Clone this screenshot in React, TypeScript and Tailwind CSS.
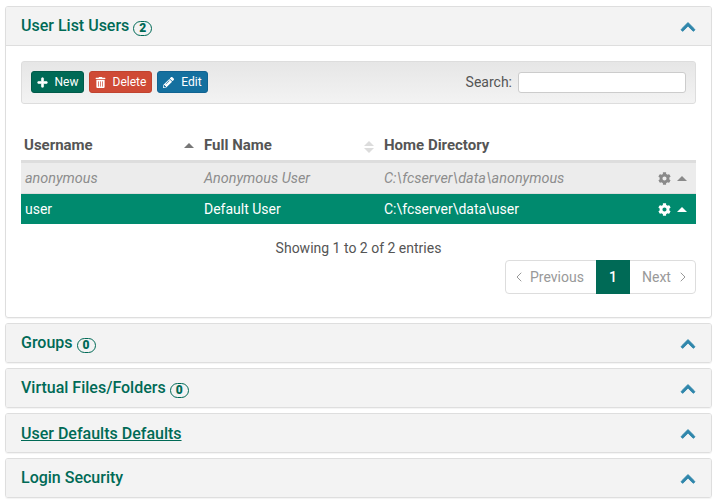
import React from 'react';
import { FaPlus, FaTrashAlt, FaPencilAlt, FaCog, FaChevronUp } from 'react-icons/fa';
import { ChevronLeft, ChevronRight } from 'lucide-react';

const Badge = ({ n }: { n: number }) => (
  <span className="inline-flex items-center justify-center w-[19px] h-[15px] ml-[4px] rounded-full border border-[#006a56] bg-[#f3f3f3] text-[12px] leading-none font-black text-[#006a56] relative top-[1px]">
    {n}
  </span>
);

const PanelHead = ({ title, badge, link, open }: { title: string; badge?: number; link?: boolean; open?: boolean }) => (
  <div className={`flex items-center justify-between bg-[#f3f3f3] pl-[15px] pr-[15px] ${open ? 'h-[39px] border-b border-[#dedede]' : 'h-[38px]'}`}>
    <div className={`text-[16px] font-medium text-[#006a56] ${link ? 'underline relative top-[1px]' : ''}`}>
      {title}
      {badge !== undefined && <Badge n={badge} />}
    </div>
    <FaChevronUp className="text-[#2f86ab] text-[16px] mt-[2px]" stroke="currentColor" strokeWidth={30} />
  </div>
);

const Collapsed = (props: { title: string; badge?: number; link?: boolean }) => (
  <div className="mt-[5px] border border-[#dedede] rounded-[3px] overflow-hidden shadow-[0_1px_1px_rgba(0,0,0,0.05)]">
    <PanelHead {...props} />
  </div>
);

const Btn = ({ bg, border, icon, label, w }: { bg: string; border: string; icon: React.ReactNode; label: string; w: string }) => (
  <button className={`flex items-center justify-center h-[22px] rounded-[3px] border text-white text-[12px] gap-[7px] ${bg} ${border} ${w}`}>
    {icon}
    {label}
  </button>
);

const SortCaret = ({ both }: { both?: boolean }) => (
  <span className="flex flex-col items-center gap-[2px]">
    <span className={`w-0 h-0 border-x-[5px] border-x-transparent border-b-[5px] ${both ? 'border-b-[#dcdcdc]' : 'border-b-[#777777]'}`} />
    {both && <span className="w-0 h-0 border-x-[5px] border-x-transparent border-t-[5px] border-t-[#dcdcdc]" />}
  </span>
);

const Row = ({ cells, selected }: { cells: string[]; selected?: boolean }) => (
  <div className={`flex items-center ${selected ? 'h-[30px] text-[14px] bg-[#008a6e] text-white' : 'h-[31px] pt-[1px] text-[14.4px] bg-[#ececec] text-[#8d8d8d] italic border-b border-[#dddddd]'}`}>
    <div className="w-[179px] pl-[4px]">{cells[0]}</div>
    <div className="w-[180px] pl-[4px]">{cells[1]}</div>
    <div className="flex-1 pl-[4px]">{cells[2]}</div>
    <FaCog className={`text-[13px] mr-[6px] ${selected ? 'text-white' : 'text-[#8a8a8a]'}`} />
    <span className={`w-0 h-0 mr-[9px] border-x-[5px] border-x-transparent border-b-[5px] ${selected ? 'border-b-white' : 'border-b-[#8a8a8a]'}`} />
  </div>
);

export default function App() {
  return (
    <div className="w-[716px] h-[504px] overflow-hidden bg-white pt-[6px] pl-[5px] pr-[4px] font-['Roboto',sans-serif] text-[#555555]">
      <div className="border border-[#dedede] rounded-[3px] overflow-hidden h-[312px] shadow-[0_1px_1px_rgba(0,0,0,0.05)]">
        <PanelHead title="User List Users" badge={2} open />
        <div className="pt-[15px] px-[15px]">
          <div className="flex items-center justify-between h-[43px] pl-[9px] pr-[9px] rounded-[3px] border border-[#dddddd] bg-gradient-to-b from-[#e6e6e6] to-[#f3f3f3]">
            <div className="flex gap-[5px] -mt-[1px]">
              <Btn bg="bg-[#006a56]" border="border-[#005a49]" w="w-[53px]" label="New" icon={<FaPlus className="text-[11px]" stroke="currentColor" strokeWidth={30} />} />
              <Btn bg="bg-[#cf4a35]" border="border-[#c0432f]" w="w-[63px]" label="Delete" icon={<FaTrashAlt className="text-[11px]" />} />
              <Btn bg="bg-[#14709f]" border="border-[#116391]" w="w-[51px]" label="Edit" icon={<FaPencilAlt className="text-[11px]" />} />
            </div>
            <div className="flex items-center gap-[6px] text-[14px]">
              <span>Search:</span>
              <input className="w-[168px] h-[21px] bg-white border border-[#cccccc] rounded-[3px]" />
            </div>
          </div>

          <div className="mt-[16px]">
            <div className="flex items-center h-[43px] pt-[10px] border-b-[3px] border-[#dddddd] text-[15px] font-bold text-[#555555]">
              <div className="w-[179px] pl-[3px] pr-[2px] flex items-center justify-between">
                Username
                <span className="mr-[4px]"><SortCaret /></span>
              </div>
              <div className="w-[180px] pl-[4px] pr-[2px] flex items-center justify-between">
                Full Name
                <span className="mr-[4px] mt-[4px]"><SortCaret both /></span>
              </div>
              <div className="pl-[4px]">Home Directory</div>
            </div>
            <Row cells={['anonymous', 'Anonymous User', 'C:\\fcserver\\data\\anonymous']} />
            <Row selected cells={['user', 'Default User', 'C:\\fcserver\\data\\user']} />
          </div>

          <div className="mt-[14px] text-center text-[14px] leading-[20px] text-[#555555]">Showing 1 to 2 of 2 entries</div>

          <div className="flex justify-end mt-[2px]">
            <div className="flex h-[34px] items-stretch text-[14px] text-[#999999] border border-[#dddddd] rounded-[4px] bg-white">
              <div className="flex items-center gap-[3px] pl-[5px] w-[90px]">
                <ChevronLeft size={16} strokeWidth={1.5} />
                Previous
              </div>
              <div className="flex items-center justify-center w-[34px] -my-[1px] bg-[#006a56] text-white font-medium">1</div>
              <div className="flex items-center gap-[4px] pl-[12px] w-[65px]">
                Next
                <ChevronRight size={16} strokeWidth={1.5} />
              </div>
            </div>
          </div>
        </div>
      </div>
      <Collapsed title="Groups" badge={0} />
      <Collapsed title="Virtual Files/Folders" badge={0} />
      <Collapsed title="User Defaults Defaults" link />
      <Collapsed title="Login Security" />
    </div>
  );
}
